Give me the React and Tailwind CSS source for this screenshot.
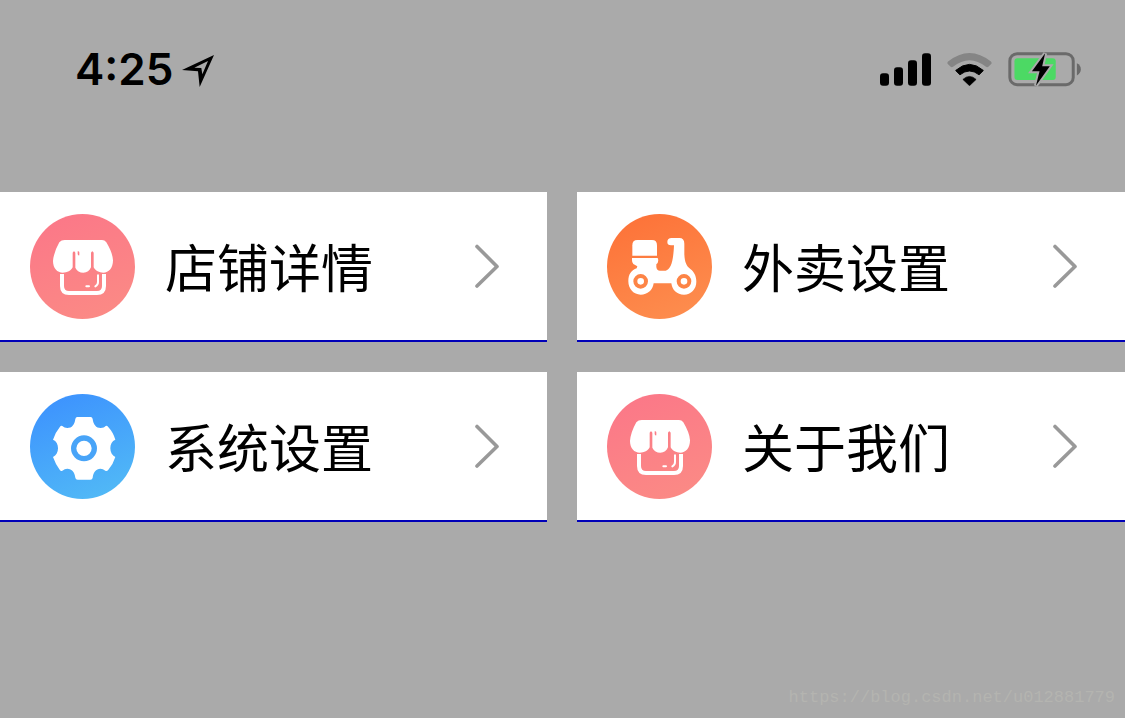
import React from "react";

function LocationArrow() {
  return (
    <svg viewBox="0 -12 96 108" className="h-9 w-8" role="img" aria-label="Location in use">
      <path d="M96 0 L53 96 L48 49 L0 45 Z M78 18 L37 38 L58 39 L61 58 Z" fill="#000" fillRule="evenodd" />
    </svg>
  );
}

function Signal() {
  return (
    <svg viewBox="0 0 153 98" className="h-[33px] w-[51px]" role="img" aria-label="Signal strength">
      <rect x="0" y="60" width="27" height="38" rx="9" />
      <rect x="42" y="42" width="27" height="56" rx="9" />
      <rect x="84" y="21" width="27" height="77" rx="9" />
      <rect x="126" y="0" width="27" height="98" rx="9" />
    </svg>
  );
}

function Wifi() {
  return (
    <svg viewBox="0 0 134 100" className="h-[33px] w-[45px]" role="img" aria-label="Wi-Fi">
      <path d="M2 26 Q67 -26 132 26 Q136 30 132 34 L125 41 Q121 45 117 42 Q67 2 17 42 Q13 45 9 41 L2 34 Q-2 30 2 26 Z" fill="#858585" />
      <path d="M25 53 Q67 16 109 53 L96 66 Q67 43 38 66 Z" stroke="#000" strokeWidth="3" strokeLinejoin="round" />
      <path d="M47 80 Q67 62 87 80 L67 99 Z" stroke="#000" strokeWidth="2" strokeLinejoin="round" />
    </svg>
  );
}

function Battery() {
  return (
    <svg viewBox="0 0 220 106" className="h-[35px] w-[73px]" role="img" aria-label="Battery charging">
      <rect x="5" y="5" width="192" height="94" rx="22" fill="none" stroke="#6a6a6a" strokeWidth="9" />
      <rect x="19" y="19" width="125" height="66" rx="9" fill="#4cd964" />
      <path d="M208 34 Q220 40 220 52 Q220 64 208 71 Z" fill="#6a6a6a" />
      <path d="M112 4 L72 58 L95 58 L84 102 L126 43 L103 43 Z" fill="#000" stroke="#aaa" strokeWidth="12" paintOrder="stroke" />
    </svg>
  );
}

function Badge({ id, from, to, children }) {
  return (
    <svg viewBox="30 27 315 315" className="h-[105px] w-[105px] shrink-0" aria-hidden="true">
      <defs>
        <linearGradient id={id} x1="0.3" y1="0" x2="0.7" y2="1">
          <stop offset="0" stopColor={from} />
          <stop offset="1" stopColor={to} />
        </linearGradient>
      </defs>
      <circle cx="187.5" cy="184.5" r="157.5" fill={`url(#${id})`} />
      {children}
    </svg>
  );
}

function StoreIcon({ id }) {
  return (
    <Badge id={id} from="#fb7888" to="#fb8a85">
      <path
        d="M134 105 H246 Q254 105 259 112 Q278 144 279 166 C279 190 266 203 250 203 C238 203 226 197 221 187 V143 Q217 134 213 143 V187 C209 197 201 203 190 203 C179 203 171 198 166 188 V143 Q162 134 158 143 V187 C153 197 142 203 128 203 C112 203 99 190 99 168 Q101 142 118 112 Q124 105 134 105 Z"
        fill="#fff"
      />
      <path d="M173 139 Q178 137 178 143 V151 Q173 152 173 146 Z" fill="#fb7d87" />
      <path d="M126 207 V243 Q126 264 147 264 H231 Q252 264 252 243 V207" fill="none" stroke="#fff" strokeWidth="12" />
      <path d="M199 244 H207 M234 211 V231 Q234 240 226 244" fill="none" stroke="#fff" strokeWidth="6" strokeLinecap="round" />
    </Badge>
  );
}

function ScooterIcon({ id }) {
  return (
    <Badge id={id} from="#fd7339" to="#fd8d4e">
      <path d="M121 105 H165 Q180 105 180 121 V152 H106 V121 Q106 105 121 105 Z" fill="#fff" />
      <path
        d="M105 159 H182 Q187 170 178 178 V186 Q179 197 189 197 H206 C222 193 229 168 231 121 H222 Q211 121 211 111 Q211 99 224 99 H247 Q262 99 262 116 V148 C263 172 269 184 280 192 C291 200 298 213 298 230 C298 252 282 269 261 269 C240 269 226 256 223 235 H170 C167 256 152 269 131 269 C110 269 94 252 94 229 C94 207 104 195 119 190 L121 184 L109 177 Q104 174 105 159 Z"
        fill="#fff"
      />
      <circle cx="131" cy="229" r="16" fill="none" stroke="#fd8446" strokeWidth="12" />
      <circle cx="261" cy="229" r="16" fill="none" stroke="#fd8446" strokeWidth="12" />
    </Badge>
  );
}

function GearIcon({ id }) {
  return (
    <Badge id={id} from="#3d93fe" to="#51b9f6">
      <path
        d="M172 96 H212 Q217 96 218 102 C220 119 228 129 242 129 C249 129 254 126 257 123 Q261 121 264 125 Q280 142 286 164 C276 168 271 178 271 190 C271 202 276 211 286 216 Q280 237 264 256 Q260 260 256 257 C251 253 247 251 241 251 C228 251 220 262 218 278 Q217 284 211 284 H173 Q167 284 166 278 C164 262 156 251 142 251 C136 251 132 253 127 257 Q123 260 120 256 Q107 239 99 216 C109 211 114 202 114 190 C114 178 109 168 99 164 Q106 142 120 125 Q123 121 127 123 C131 127 136 129 142 129 C156 129 164 119 166 102 Q167 96 172 96 Z"
        fill="#fff"
      />
      <circle cx="192" cy="190" r="31" fill="none" stroke="#48a4f8" strokeWidth="16" />
    </Badge>
  );
}

function Chevron() {
  return (
    <svg viewBox="0 0 24 44" className="h-11 w-6 shrink-0" fill="none" stroke="#999" strokeWidth="3.6" strokeLinecap="round" strokeLinejoin="round" aria-hidden="true">
      <path d="M2 2.5 L22 22.5 L2 42" />
    </svg>
  );
}

const items = [
  { label: "店铺详情", Icon: StoreIcon },
  { label: "外卖设置", Icon: ScooterIcon },
  { label: "系统设置", Icon: GearIcon },
  { label: "关于我们", Icon: StoreIcon },
];

export default function App() {
  return (
    <div className="flex min-h-screen flex-col bg-[#aaa] font-['Noto_Sans_CJK_SC',sans-serif] text-black">
      <header className="flex h-48 items-start justify-between pt-10 pr-11 pl-[75px]">
        <div className="flex h-[58px] items-center gap-[9px]">
          <time className="font-[Inter,sans-serif] text-[44px] leading-none font-semibold">4:25</time>
          <LocationArrow />
        </div>
        <div className="flex h-[58px] items-center gap-4">
          <Signal />
          <Wifi />
          <Battery />
        </div>
      </header>
      <nav className="grid grid-cols-[547fr_548fr] gap-[30px]">
        {items.map(({ label, Icon }, i) => (
          <a key={label} href="#" className="flex h-[150px] items-center gap-[30px] border-b-2 border-[#0000b8] bg-white pr-12 pl-[30px]">
            <Icon id={`badge-${i}`} />
            <span className="flex-1 text-[52px] leading-none whitespace-nowrap">{label}</span>
            <Chevron />
          </a>
        ))}
      </nav>
      <footer className="mt-auto flex justify-end px-2.5 pb-2">
        <span className="font-['Liberation_Mono',monospace] text-[17px] leading-6 text-[#b4b4b0]">https://blog.csdn.net/u012881779</span>
      </footer>
    </div>
  );
}
